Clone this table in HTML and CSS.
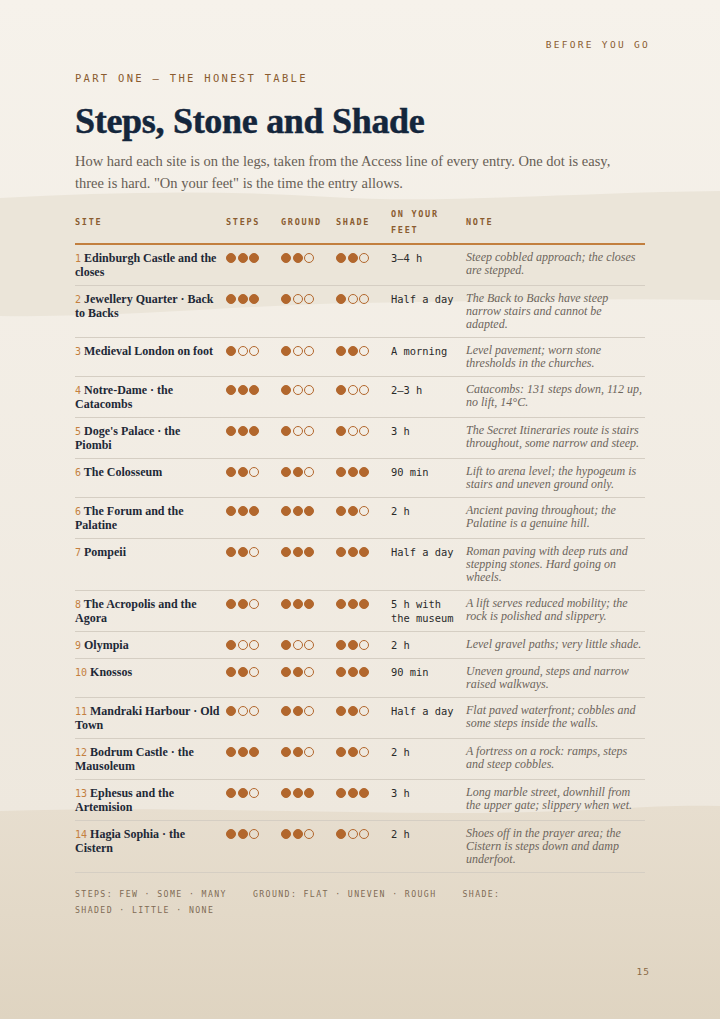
FILE: index.html
```html
<!DOCTYPE html>
<html lang="en">
<head>
<meta charset="utf-8">
<title>Steps, Stone and Shade</title>
<link rel="stylesheet" href="styles.css">
</head>
<body>
<main class="page">
  <header class="running-head">BEFORE YOU GO</header>
  <p class="eyebrow">PART ONE — THE HONEST TABLE</p>
  <h1 class="title">Steps, Stone and Shade</h1>
  <p class="intro">How hard each site is on the legs, taken from the Access line of every entry. One dot is easy, three is hard. "On your feet" is the time the entry allows.</p>

  <table class="access">
    <colgroup>
      <col class="c-site"><col class="c-dots"><col class="c-dots"><col class="c-dots"><col class="c-feet"><col class="c-note">
    </colgroup>
    <thead>
      <tr><th>SITE</th><th>STEPS</th><th>GROUND</th><th>SHADE</th><th>ON YOUR FEET</th><th>NOTE</th></tr>
    </thead>
    <tbody>
      <tr><td class="site"><span class="num">1</span> Edinburgh Castle and the closes</td>
        <td><span class="dots"><span class="dot on"></span><span class="dot on"></span><span class="dot on"></span></span></td>
        <td><span class="dots"><span class="dot on"></span><span class="dot on"></span><span class="dot"></span></span></td>
        <td><span class="dots"><span class="dot on"></span><span class="dot on"></span><span class="dot"></span></span></td>
        <td class="feet">3–4 h</td><td class="note">Steep cobbled approach; the closes are stepped.</td></tr>
      <tr><td class="site"><span class="num">2</span> Jewellery Quarter · Back to Backs</td>
        <td><span class="dots"><span class="dot on"></span><span class="dot on"></span><span class="dot on"></span></span></td>
        <td><span class="dots"><span class="dot on"></span><span class="dot"></span><span class="dot"></span></span></td>
        <td><span class="dots"><span class="dot on"></span><span class="dot"></span><span class="dot"></span></span></td>
        <td class="feet">Half a day</td><td class="note">The Back to Backs have steep narrow stairs and cannot be adapted.</td></tr>
      <tr><td class="site"><span class="num">3</span> Medieval London on foot</td>
        <td><span class="dots"><span class="dot on"></span><span class="dot"></span><span class="dot"></span></span></td>
        <td><span class="dots"><span class="dot on"></span><span class="dot"></span><span class="dot"></span></span></td>
        <td><span class="dots"><span class="dot on"></span><span class="dot on"></span><span class="dot"></span></span></td>
        <td class="feet">A morning</td><td class="note">Level pavement; worn stone thresholds in the churches.</td></tr>
      <tr><td class="site"><span class="num">4</span> Notre-Dame · the Catacombs</td>
        <td><span class="dots"><span class="dot on"></span><span class="dot on"></span><span class="dot on"></span></span></td>
        <td><span class="dots"><span class="dot on"></span><span class="dot"></span><span class="dot"></span></span></td>
        <td><span class="dots"><span class="dot on"></span><span class="dot"></span><span class="dot"></span></span></td>
        <td class="feet">2–3 h</td><td class="note">Catacombs: 131 steps down, 112 up, no lift, 14°C.</td></tr>
      <tr><td class="site"><span class="num">5</span> Doge's Palace · the<br>Piombi</td>
        <td><span class="dots"><span class="dot on"></span><span class="dot on"></span><span class="dot on"></span></span></td>
        <td><span class="dots"><span class="dot on"></span><span class="dot"></span><span class="dot"></span></span></td>
        <td><span class="dots"><span class="dot on"></span><span class="dot"></span><span class="dot"></span></span></td>
        <td class="feet">3 h</td><td class="note">The Secret Itineraries route is stairs throughout, some narrow and steep.</td></tr>
      <tr><td class="site"><span class="num">6</span> The Colosseum</td>
        <td><span class="dots"><span class="dot on"></span><span class="dot on"></span><span class="dot"></span></span></td>
        <td><span class="dots"><span class="dot on"></span><span class="dot on"></span><span class="dot"></span></span></td>
        <td><span class="dots"><span class="dot on"></span><span class="dot on"></span><span class="dot on"></span></span></td>
        <td class="feet">90 min</td><td class="note">Lift to arena level; the hypogeum is stairs and uneven ground only.</td></tr>
      <tr><td class="site"><span class="num">6</span> The Forum and the Palatine</td>
        <td><span class="dots"><span class="dot on"></span><span class="dot on"></span><span class="dot on"></span></span></td>
        <td><span class="dots"><span class="dot on"></span><span class="dot on"></span><span class="dot on"></span></span></td>
        <td><span class="dots"><span class="dot on"></span><span class="dot on"></span><span class="dot"></span></span></td>
        <td class="feet">2 h</td><td class="note">Ancient paving throughout; the Palatine is a genuine hill.</td></tr>
      <tr><td class="site"><span class="num">7</span> Pompeii</td>
        <td><span class="dots"><span class="dot on"></span><span class="dot on"></span><span class="dot"></span></span></td>
        <td><span class="dots"><span class="dot on"></span><span class="dot on"></span><span class="dot on"></span></span></td>
        <td><span class="dots"><span class="dot on"></span><span class="dot on"></span><span class="dot on"></span></span></td>
        <td class="feet">Half a day</td><td class="note">Roman paving with deep ruts and stepping stones. Hard going on wheels.</td></tr>
      <tr><td class="site"><span class="num">8</span> The Acropolis and the Agora</td>
        <td><span class="dots"><span class="dot on"></span><span class="dot on"></span><span class="dot"></span></span></td>
        <td><span class="dots"><span class="dot on"></span><span class="dot on"></span><span class="dot on"></span></span></td>
        <td><span class="dots"><span class="dot on"></span><span class="dot on"></span><span class="dot on"></span></span></td>
        <td class="feet">5 h with the museum</td><td class="note">A lift serves reduced mobility; the rock is polished and slippery.</td></tr>
      <tr><td class="site"><span class="num">9</span> Olympia</td>
        <td><span class="dots"><span class="dot on"></span><span class="dot"></span><span class="dot"></span></span></td>
        <td><span class="dots"><span class="dot on"></span><span class="dot"></span><span class="dot"></span></span></td>
        <td><span class="dots"><span class="dot on"></span><span class="dot on"></span><span class="dot"></span></span></td>
        <td class="feet">2 h</td><td class="note">Level gravel paths; very little shade.</td></tr>
      <tr><td class="site"><span class="num">10</span> Knossos</td>
        <td><span class="dots"><span class="dot on"></span><span class="dot on"></span><span class="dot"></span></span></td>
        <td><span class="dots"><span class="dot on"></span><span class="dot on"></span><span class="dot"></span></span></td>
        <td><span class="dots"><span class="dot on"></span><span class="dot on"></span><span class="dot on"></span></span></td>
        <td class="feet">90 min</td><td class="note">Uneven ground, steps and narrow raised walkways.</td></tr>
      <tr><td class="site"><span class="num">11</span> Mandraki Harbour · Old Town</td>
        <td><span class="dots"><span class="dot on"></span><span class="dot"></span><span class="dot"></span></span></td>
        <td><span class="dots"><span class="dot on"></span><span class="dot on"></span><span class="dot"></span></span></td>
        <td><span class="dots"><span class="dot on"></span><span class="dot on"></span><span class="dot"></span></span></td>
        <td class="feet">Half a day</td><td class="note">Flat paved waterfront; cobbles and some steps inside the walls.</td></tr>
      <tr><td class="site"><span class="num">12</span> Bodrum Castle · the Mausoleum</td>
        <td><span class="dots"><span class="dot on"></span><span class="dot on"></span><span class="dot on"></span></span></td>
        <td><span class="dots"><span class="dot on"></span><span class="dot on"></span><span class="dot"></span></span></td>
        <td><span class="dots"><span class="dot on"></span><span class="dot on"></span><span class="dot"></span></span></td>
        <td class="feet">2 h</td><td class="note">A fortress on a rock: ramps, steps and steep cobbles.</td></tr>
      <tr><td class="site"><span class="num">13</span> Ephesus and the Artemision</td>
        <td><span class="dots"><span class="dot on"></span><span class="dot on"></span><span class="dot"></span></span></td>
        <td><span class="dots"><span class="dot on"></span><span class="dot on"></span><span class="dot on"></span></span></td>
        <td><span class="dots"><span class="dot on"></span><span class="dot on"></span><span class="dot on"></span></span></td>
        <td class="feet">3 h</td><td class="note">Long marble street, downhill from the upper gate; slippery when wet.</td></tr>
      <tr><td class="site"><span class="num">14</span> Hagia Sophia · the Cistern</td>
        <td><span class="dots"><span class="dot on"></span><span class="dot on"></span><span class="dot"></span></span></td>
        <td><span class="dots"><span class="dot on"></span><span class="dot on"></span><span class="dot"></span></span></td>
        <td><span class="dots"><span class="dot on"></span><span class="dot"></span><span class="dot"></span></span></td>
        <td class="feet">2 h</td><td class="note">Shoes off in the prayer area; the Cistern is steps down and damp underfoot.</td></tr>
    </tbody>
  </table>

  <p class="legend"><span class="legend-group">STEPS: FEW · SOME · MANY</span><span class="legend-group">GROUND: FLAT · UNEVEN · ROUGH</span><span class="legend-group">SHADE: SHADED · LITTLE · NONE</span></p>

  <footer class="folio">15</footer>
</main>
</body>
</html>
```
FILE: styles.css
```css
* { box-sizing: border-box; }

html, body {
  margin: 0;
  padding: 0;
}

body {
  background: #f4efe7;
}

.page {
  display: flex;
  flex-direction: column;
  min-height: 1019px;
  padding: 38px 75px 40px 75px;
  background-image: url("data:image/svg+xml,%3Csvg xmlns='http://www.w3.org/2000/svg' viewBox='0 0 720 1019' preserveAspectRatio='none'%3E%3Cdefs%3E%3ClinearGradient id='g' x1='0' y1='0' x2='0' y2='1'%3E%3Cstop offset='0' stop-color='%23f6f2eb'/%3E%3Cstop offset='0.8' stop-color='%23eee8de'/%3E%3Cstop offset='1' stop-color='%23ebe5da'/%3E%3C/linearGradient%3E%3ClinearGradient id='b' x1='0' y1='0' x2='0' y2='1'%3E%3Cstop offset='0' stop-color='%23e7decf'/%3E%3Cstop offset='1' stop-color='%23dfd4c1'/%3E%3C/linearGradient%3E%3C/defs%3E%3Crect width='720' height='1019' fill='url(%23g)'/%3E%3Cpath d='M0 198 C110 192 220 190 330 197 S560 193 720 191 L720 300 C600 298 480 301 360 303 S120 318 0 316 Z' fill='%23ebe5d9'/%3E%3Cpath d='M0 811 C150 806 300 813 450 813 S640 804 720 806 L720 1019 L0 1019 Z' fill='url(%23b)'/%3E%3C/svg%3E");
  background-size: 100% 100%;
  background-repeat: no-repeat;
}

.running-head {
  margin: 0 -5px 0 0;
  text-align: right;
  font-family: "DejaVu Sans Mono", monospace;
  font-size: 9.5px;
  line-height: 14px;
  letter-spacing: 2.3px;
  color: #8a5c30;
}

.eyebrow {
  margin: 19px 0 0;
  font-family: "DejaVu Sans Mono", monospace;
  font-size: 10.5px;
  line-height: 14px;
  letter-spacing: 2.3px;
  color: #8a5c30;
}

.title {
  margin: 14px 0 0;
  font-family: "Liberation Serif", serif;
  font-weight: 700;
  font-size: 36px;
  line-height: 44px;
  letter-spacing: -0.3px;
  color: #14263c;
  -webkit-text-stroke: 0.5px #14263c;
}

.intro {
  margin: 7px 0 0;
  max-width: 560px;
  font-family: "Liberation Serif", serif;
  font-size: 14.5px;
  line-height: 22px;
  color: #675e55;
}

.access {
  margin-top: 7px;
  width: 570px;
  table-layout: fixed;
  border-collapse: collapse;
}

.c-site { width: 151px; }
.c-dots { width: 55px; }
.c-feet { width: 75px; }
.c-note { width: 179px; }

.access th {
  padding: 5px 6px 5px 0;
  text-align: left;
  vertical-align: middle;
  font-family: "DejaVu Sans Mono", monospace;
  font-weight: 700;
  font-size: 8.5px;
  line-height: 16px;
  letter-spacing: 1.7px;
  color: #8a5c30;
  border-bottom: 2px solid #c27f3f;
}

.access td {
  padding: 6px 6px 6px 0;
  vertical-align: top;
  border-bottom: 1px solid #d5cec3;
}

.access td.site { padding-right: 5px; }
.access td.note { padding-right: 0; }

.site {
  font-family: "Liberation Serif", serif;
  font-weight: 700;
  font-size: 12px;
  line-height: 14px;
  color: #1e2937;
}

.num {
  font-family: "DejaVu Sans Mono", monospace;
  font-weight: 400;
  font-size: 10px;
  line-height: 1;
  color: #c47f3e;
}

.dots {
  display: flex;
  align-items: center;
  gap: 1.6px;
  height: 14px;
}

.dot {
  display: block;
  width: 10px;
  height: 10px;
  border-radius: 50%;
  border: 1px solid #b2672d;
}

.dot.on {
  background: #b2672d;
}

.feet {
  font-family: "DejaVu Sans Mono", monospace;
  font-size: 10.4px;
  line-height: 14px;
  color: #2a2a2a;
}

.note {
  font-family: "Liberation Serif", serif;
  font-style: italic;
  font-size: 12px;
  line-height: 13px;
  color: #6d655c;
}

.legend {
  margin: 13px 0 0;
  max-width: 460px;
  font-family: "DejaVu Sans Mono", monospace;
  font-size: 8.2px;
  line-height: 16px;
  letter-spacing: 1.4px;
  color: #7f6b55;
}

.legend-group {
  margin-right: 26px;
}

.folio {
  margin: auto -5px 0 0;
  text-align: right;
  font-family: "DejaVu Sans Mono", monospace;
  font-size: 9.5px;
  line-height: 14px;
  letter-spacing: 1px;
  color: #8a6a45;
}
```
